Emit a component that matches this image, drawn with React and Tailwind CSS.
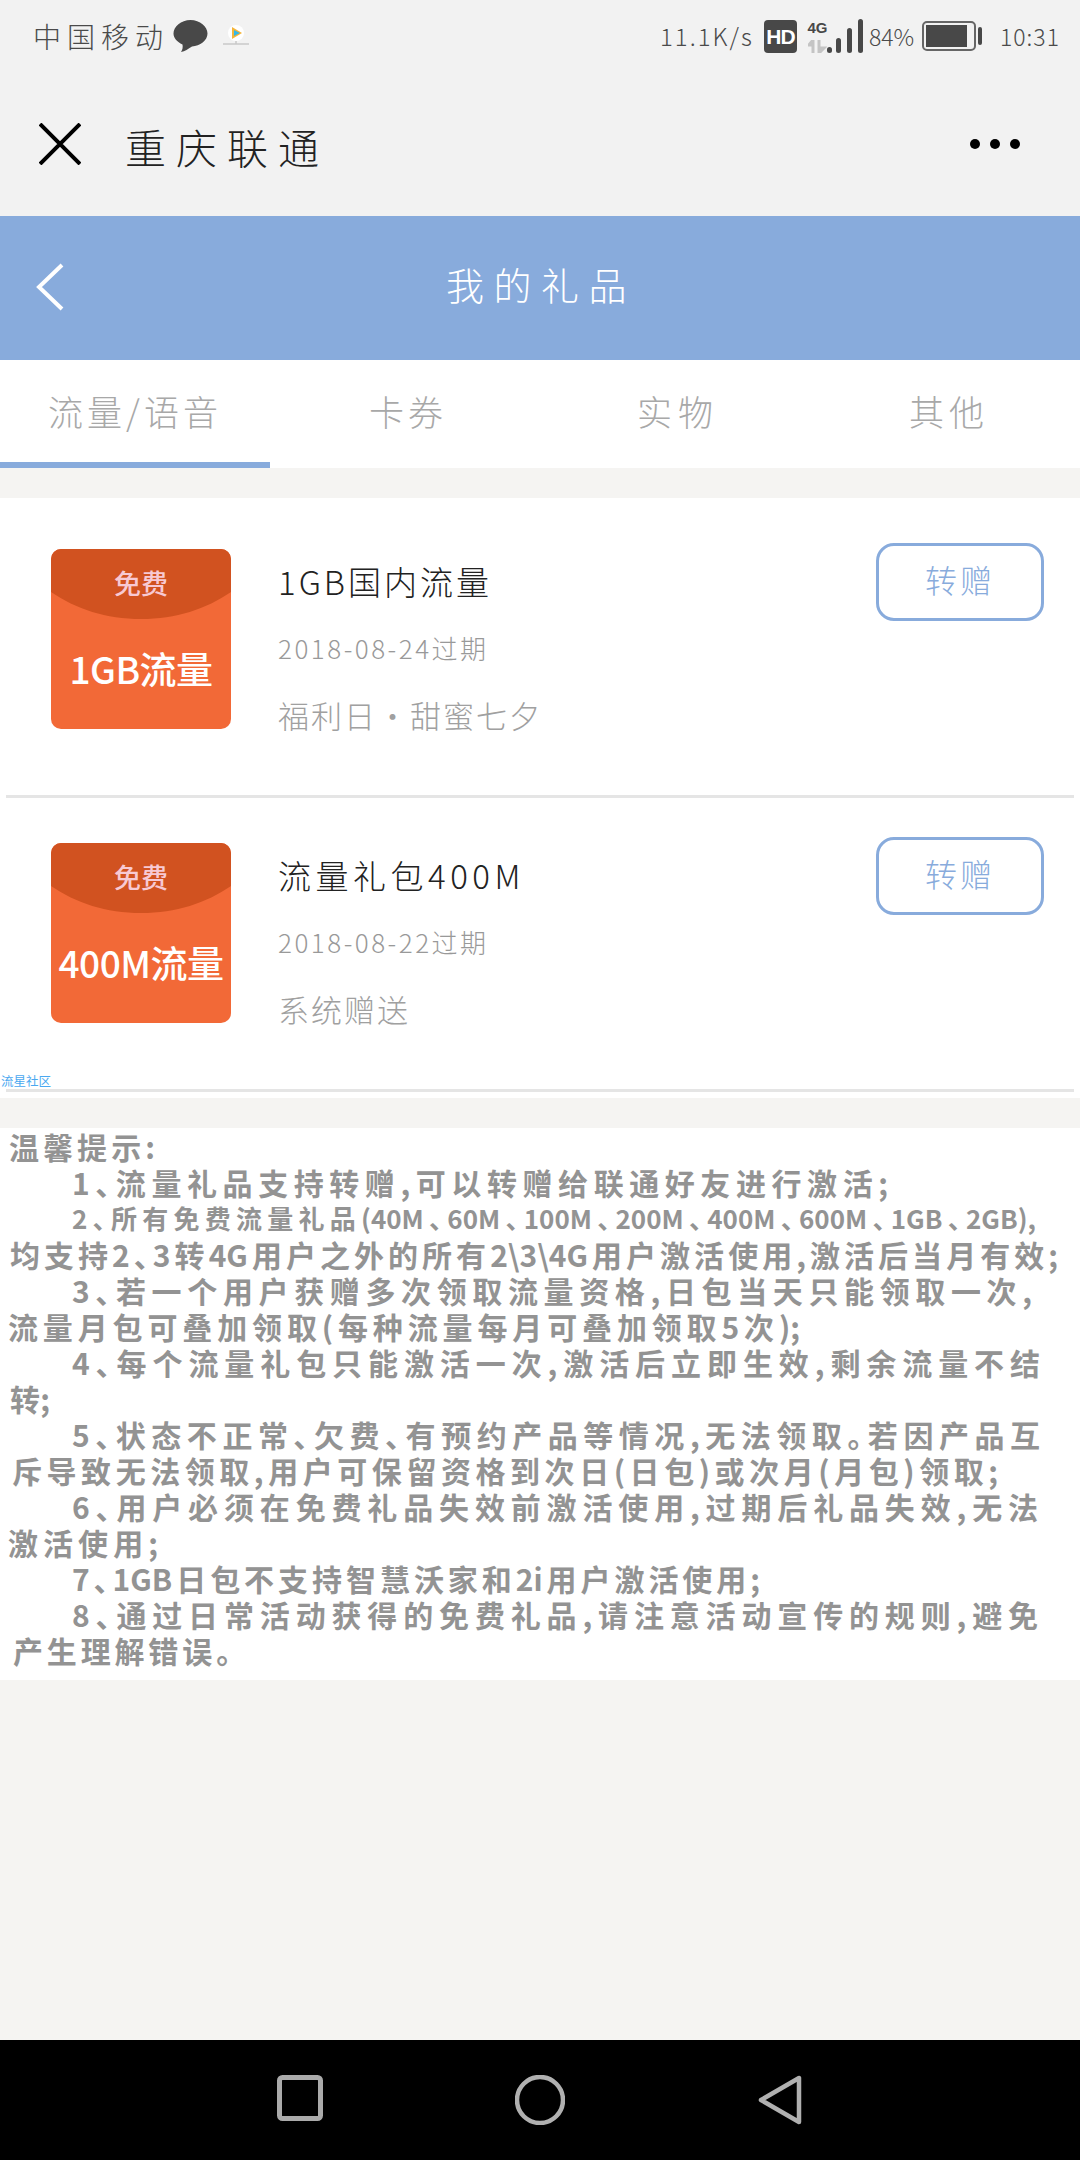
import React from "react";

const CJK = { fontFamily: '"Noto Sans CJK SC", "Noto Sans", sans-serif' };

const notes = [
  { text: "温馨提示:", cls: "ml-[9px] w-[146px]" },
  { text: "1、流量礼品支持转赠,可以转赠给联通好友进行激活;", cls: "ml-[72px] w-[816px]" },
  { text: "2、所有免费流量礼品(40M、60M、100M、200M、400M、600M、1GB、2GB),", cls: "ml-[72px] w-[964px] text-[26px]" },
  { text: "均支持2、3转4G用户之外的所有2\\3\\4G用户激活使用,激活后当月有效;", cls: "ml-[10px] w-[1048px]" },
  { text: "3、若一个用户获赠多次领取流量资格,日包当天只能领取一次,", cls: "ml-[72px] w-[960px]" },
  { text: "流量月包可叠加领取(每种流量每月可叠加领取5次);", cls: "ml-[8px] w-[792px]" },
  { text: "4、每个流量礼包只能激活一次,激活后立即生效,剩余流量不结", cls: "ml-[72px] w-[968px]" },
  { text: "转;", cls: "ml-[10px] w-[40px]" },
  { text: "5、状态不正常、欠费、有预约产品等情况,无法领取。若因产品互", cls: "ml-[72px] w-[968px]" },
  { text: "斥导致无法领取,用户可保留资格到次日(日包)或次月(月包)领取;", cls: "ml-[12px] w-[986px]" },
  { text: "6、用户必须在免费礼品失效前激活使用,过期后礼品失效,无法", cls: "ml-[72px] w-[966px]" },
  { text: "激活使用;", cls: "ml-[8px] w-[150px]" },
  { text: "7、1GB日包不支持智慧沃家和2i用户激活使用;", cls: "ml-[72px] w-[688px]" },
  { text: "8、通过日常活动获得的免费礼品,请注意活动宣传的规则,避免", cls: "ml-[72px] w-[966px]" },
  { text: "产生理解错误。", cls: "ml-[13px] w-[218px]" },
];

const StatusBar = () => (
  <div className="flex h-[72px] items-center text-[#4a4a4a]">
    <span className="ml-[33px] w-[132px] text-[28px] font-light tracking-[6px] whitespace-nowrap">中国移动</span>
    <svg className="ml-[8px]" width="35" height="34" viewBox="0 0 35 34">
      <path d="M17.5 1C27 1 34.500 7.500 34.500 14.500S27 27 19 27.500C15 30 12 32.500 8 33C9.500 31 10 28 9.500 25.500C4 23 0.500 19 0.500 14.500C0.500 7.500 8 1 17.500 1Z" fill="#484848" />
    </svg>
    <svg className="ml-[14px] mt-[4px]" width="28" height="36" viewBox="0 0 28 36">
      <circle cx="14" cy="13" r="8" fill="#fff" />
      <path d="M10 7L20 13L10 19Z" fill="#f5b53a" />
      <path d="M12 10L18 13L12 16Z" fill="#35b8e8" />
      <path d="M1 24H27" stroke="#c8c8c8" strokeWidth="1.500" />
      <path d="M14 21V24" stroke="#c8c8c8" strokeWidth="1.500" />
    </svg>

    <span className="ml-auto w-[92px] text-[24px] font-light tracking-[2px] whitespace-nowrap">11.1K/s</span>
    <div className="ml-[12px] flex h-[33px] w-[33px] items-center justify-center rounded-[4px] bg-[#484848] text-[21px] leading-none font-bold tracking-[-1px] text-white [font-family:'Liberation_Sans',sans-serif]">
      HD
    </div>
    <div className="ml-[11px] flex h-[33px] w-[19px] flex-col items-center justify-between">
      <span className="text-[15px] leading-[15px] font-bold text-[#484848] [font-family:'Liberation_Sans',sans-serif]">4G</span>
      <svg width="19" height="13" viewBox="0 0 19 13">
        <path d="M5 0V13M1 5L5 0V5ZM11 13V0M11 8L16 8L11 13Z" stroke="#c4c4c4" strokeWidth="3" fill="#c4c4c4" />
      </svg>
    </div>
    <svg width="36" height="34" viewBox="0 0 36 34">
      <rect x="0" y="28" width="5" height="6" rx="2.500" fill="#484848" />
      <rect x="9" y="19" width="5" height="15" rx="2.500" fill="#484848" />
      <rect x="20" y="9" width="5" height="25" rx="2.500" fill="#484848" />
      <rect x="31" y="0" width="5" height="34" rx="2.500" fill="#484848" />
    </svg>
    <span className="ml-[6px] w-[44px] text-[23px] font-light whitespace-nowrap">84%</span>
    <svg className="ml-[9px]" width="60" height="30" viewBox="0 0 60 30">
      <rect x="1" y="1" width="52" height="28" rx="4" fill="none" stroke="#666" strokeWidth="2" />
      <rect x="4" y="4" width="41" height="22" fill="#484848" />
      <rect x="56" y="6" width="4" height="18" rx="2" fill="#484848" />
    </svg>
    <span className="mr-[28px] ml-[18px] w-[52px] text-[23px] font-light tracking-[1px] whitespace-nowrap">10:31</span>
  </div>
);

const Gift = ({ amount, title, titleCls, date, source, pt, height }) => (
  <div className={`flex items-start bg-white pr-[36px] pl-[51px] ${pt} ${height}`}>
    <div className="relative mt-[6px] h-[180px] w-[180px] shrink-0 overflow-hidden rounded-[10px] bg-[#f26937] text-center">
      <svg className="absolute top-0 left-0" width="180" height="70" viewBox="0 0 180 70">
        <path d="M0 0H180V43C155 60 125 70 90 70S25 60 0 43Z" fill="#d15220" />
      </svg>
      <div className="relative pt-[16px] text-[27px] leading-[36px] font-medium text-[#f7c9d3]">免费</div>
      <div className="relative mt-[45px] text-[37px] leading-[44px] font-medium tracking-[-0.500px] whitespace-nowrap text-white">{amount}</div>
    </div>
    <div className="mt-[16px] ml-[47px] flex flex-1 flex-col gap-[23px] whitespace-nowrap">
      <div className={`text-[33px] leading-[44px] font-light text-[#222] ${titleCls}`}>{title}</div>
      <div className="text-[26px] leading-[44px] font-light tracking-[2.500px] text-[#999]">{date}</div>
      <div className="text-[31px] leading-[44px] font-light tracking-[2px] text-[#a0a0a0]">{source}</div>
    </div>
    <button className="h-[78px] w-[168px] shrink-0 rounded-[18px] border-[3px] border-[#88abdc] pb-[6px] text-[32px] font-light tracking-[3px] text-[#88abdc]">
      转赠
    </button>
  </div>
);

const App = () => {
  return (
    <div className="flex h-[2160px] w-[1080px] flex-col overflow-hidden bg-[#f5f4f2]" style={CJK}>
      {/* top chrome */}
      <div className="bg-[#f2f2f2]">
        <StatusBar />
        <div className="flex h-[144px] items-center pr-[60px] pl-[39px]">
          <svg width="42" height="42" viewBox="0 0 42 42">
            <path d="M1 1L41 41M41 1L1 41" stroke="#000" strokeWidth="4" fill="none" />
          </svg>
          <span className="mt-[6px] ml-[44px] text-[41px] font-light tracking-[10px] text-[#222]">重庆联通</span>
          <div className="ml-auto flex gap-[10px]">
            <span className="h-[10px] w-[10px] rounded-full bg-black" />
            <span className="h-[10px] w-[10px] rounded-full bg-black" />
            <span className="h-[10px] w-[10px] rounded-full bg-black" />
          </div>
        </div>
      </div>

      {/* page header */}
      <div className="relative flex h-[144px] items-center justify-center bg-[#88abdc]">
        <svg className="absolute top-[47px] left-[35px]" width="30" height="48" viewBox="0 0 30 48">
          <path d="M27 2L4 24L27 46" stroke="#fff" strokeWidth="4" fill="none" />
        </svg>
        <span className="mb-[10px] pl-[2px] text-[38px] font-light tracking-[9.500px] text-white">我的礼品</span>
      </div>

      {/* tabs */}
      <div className="grid h-[108px] grid-cols-4 bg-white text-[35px] font-light text-[#a8a8a8]">
        <div className="flex items-center justify-center border-b-[6px] border-[#88abdc] tracking-[4px] whitespace-nowrap">流量/语音</div>
        <div className="flex items-center justify-center pb-[6px] pl-[6px] tracking-[4px]">卡券</div>
        <div className="flex items-center justify-center pb-[6px] pl-[6px] tracking-[6px]">实物</div>
        <div className="flex items-center justify-center pb-[6px] pl-[8px] tracking-[5px]">其他</div>
      </div>

      {/* gift list */}
      <div className="relative mt-[30px] bg-white">
        <Gift amount="1GB流量" title="1GB国内流量" titleCls="tracking-[3px]" date="2018-08-24过期" source="福利日·甜蜜七夕" pt="pt-[45px]" height="h-[297px]" />
        <div className="mx-[6px] h-[3px] bg-[#e5e5e5]" />
        <Gift amount="400M流量" title="流量礼包400M" titleCls="tracking-[4.500px]" date="2018-08-22过期" source="系统赠送" pt="pt-[39px]" height="h-[291px]" />
        <div className="mx-[6px] h-[3px] bg-[#e5e5e5]" />
        <div className="h-[6px]" />
        <span className="absolute top-[576px] left-[1px] text-[12.500px] leading-[14px] text-[#4aa8f0]">流星社区</span>
      </div>

      {/* notes */}
      <div className="mt-[30px] h-[552px] bg-white text-[30px] leading-[36px] font-bold text-[#939393] [font-feature-settings:'palt']">
        {notes.map((line) => (
          <div key={line.text} className={`h-[36px] [text-align-last:justify] ${line.cls}`}>
            {line.text}
          </div>
        ))}
      </div>

      {/* system nav */}
      <div className="mt-auto flex h-[120px] items-center justify-center bg-black">
        <div className="grid grid-cols-3">
          <div className="flex w-[240px] justify-center">
            <svg width="46" height="46" viewBox="0 0 46 46">
              <rect x="2.500" y="2.500" width="41" height="41" rx="3" stroke="#aaa" strokeWidth="5" fill="none" />
            </svg>
          </div>
          <div className="flex w-[240px] justify-center">
            <svg width="50" height="50" viewBox="0 0 50 50">
              <circle cx="25" cy="25" r="23" stroke="#b0b0b0" strokeWidth="4.500" fill="none" />
            </svg>
          </div>
          <div className="flex w-[240px] justify-center">
            <svg width="44" height="50" viewBox="0 0 44 50">
              <path d="M41 3V47L3 25Z" stroke="#b0b0b0" strokeWidth="4.500" strokeLinejoin="round" fill="none" />
            </svg>
          </div>
        </div>
      </div>
    </div>
  );
};

export default App;
